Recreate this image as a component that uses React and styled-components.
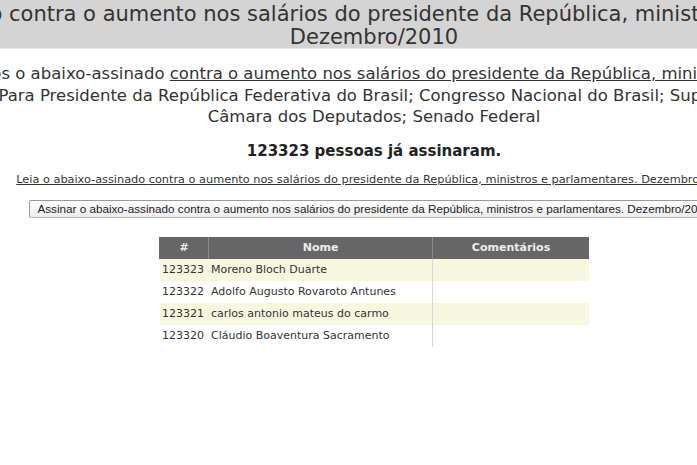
import styled, { createGlobalStyle } from "styled-components";

const GlobalStyle = createGlobalStyle`
    html, body {
        margin: 0;
        padding: 0;
        background: #ffffff;
        overflow: hidden;
    }
    body {
        font-family: "DejaVu Sans", Verdana, sans-serif;
        color: #333333;
    }
`

const Page = styled.div`
    width: 1000px;
    margin-left: -126px;
    display: flex;
    flex-direction: column;
    align-items: center;
`

const Header = styled.header`
    width: 100%;
    height: 49px;
    box-sizing: border-box;
    background: #d4d4d4;
    border-bottom: 1px solid #e4e4e4;
    padding-top: 3px;
    display: flex;
    justify-content: center;
`

const Title = styled.h1`
    margin: 0;
    font-size: 21px;
    font-weight: normal;
    line-height: 23px;
    text-align: center;
    white-space: nowrap;
    color: #333333;
`

const Intro = styled.p`
    margin: 14px 0 0;
    font-size: 16.5px;
    line-height: 21.5px;
    text-align: center;
    white-space: nowrap;
    color: #333333;

    a {
        color: #333333;
        text-decoration: underline;
    }
`

const Count = styled.p`
    margin: 13px 0 0;
    font-size: 15px;
    font-weight: bold;
    line-height: 20px;
    text-align: center;
    color: #222222;
`

const ReadLink = styled.a`
    margin-top: 12px;
    font-size: 11.3px;
    line-height: 14px;
    color: #333333;
    text-decoration: underline;
    white-space: nowrap;
`

const SignButton = styled.button`
    margin-top: 13px;
    height: 18px;
    padding: 0 7px;
    font-family: "Liberation Sans", Tahoma, sans-serif;
    font-size: 11.7px;
    color: #222222;
    white-space: nowrap;
    background: linear-gradient(#fdfdfd, #ededed);
    border: 1px solid #9a9a9a;
    border-bottom-color: #b8b8b8;
    border-radius: 2px;
`

const Table = styled.table`
    margin-top: 19px;
    width: 430px;
    border-collapse: collapse;
    font-size: 11px;
    color: #333333;
`

const HeadCell = styled.th`
    height: 22px;
    padding: 0;
    width: ${(p) => p.$w}px;
    background: #666666;
    color: #ececec;
    font-weight: bold;
    text-align: center;
    border-left: 1px solid ${(p) => (p.$first ? "#666666" : "#8a8a8a")};
`

const Row = styled.tr`
    background: ${(p) => (p.$odd ? "#f7f7df" : "#ffffff")};
`

const Cell = styled.td`
    height: 22px;
    padding: 0 4px 0 2px;
    white-space: nowrap;
    border-left: 1px solid ${(p) => (p.$line ? "#d6d6d6" : "transparent")};
`

const signatures = [
    { id: 123323, name: "Moreno Bloch Duarte" },
    { id: 123322, name: "Adolfo Augusto Rovaroto Antunes" },
    { id: 123321, name: "carlos antonio mateus do carmo" },
    { id: 123320, name: "Cláudio Boaventura Sacramento" },
];

const subject =
    "contra o aumento nos salários do presidente da República, ministros e parlamentares. Dezembro/2010";

const App = () => {
    return (
        <>
            <GlobalStyle />
            <Page>
                <Header>
                    <Title>
                        Abaixo-assinado contra o aumento nos salários do presidente da República, ministros e parlamentares.
                        <br />
                        Dezembro/2010
                    </Title>
                </Header>
                <Intro>
                    Assine e divulgue entre os amigos o abaixo-assinado <a href="#">{subject}</a>
                    <br />
                    Para Presidente da República Federativa do Brasil; Congresso Nacional do Brasil; Supremo;
                    <br />
                    Câmara dos Deputados; Senado Federal
                </Intro>
                <Count>123323 pessoas já assinaram.</Count>
                <ReadLink href="#">Leia o abaixo-assinado {subject}</ReadLink>
                <SignButton>Assinar o abaixo-assinado {subject}</SignButton>
                <Table>
                    <thead>
                        <tr>
                            <HeadCell $w={48} $first>#</HeadCell>
                            <HeadCell $w={224}>Nome</HeadCell>
                            <HeadCell $w={158}>Comentários</HeadCell>
                        </tr>
                    </thead>
                    <tbody>
                        {signatures.map((s, i) => (
                            <Row key={s.id} $odd={i % 2 === 0}>
                                <Cell>{s.id}</Cell>
                                <Cell>{s.name}</Cell>
                                <Cell $line></Cell>
                            </Row>
                        ))}
                    </tbody>
                </Table>
            </Page>
        </>
    );
};

export default App;
